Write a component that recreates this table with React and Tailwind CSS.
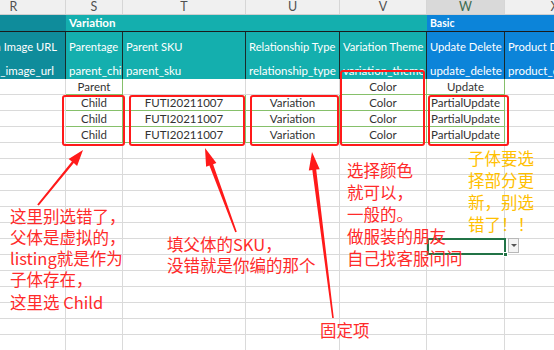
import React from 'react';

const W = ['w-[104px]', 'w-[57px]', 'w-[123px]', 'w-[94px]', 'w-[87px]', 'w-[78px]', 'w-[100px]'];
const LETTERS = ['R', 'S', 'T', 'U', 'V', 'W', 'X'];

function arrowPoints(tip, tail, headLen, headHalf, tailHalf, baseHalf) {
  const dx = tip[0] - tail[0];
  const dy = tip[1] - tail[1];
  const len = Math.hypot(dx, dy);
  const ux = dx / len, uy = dy / len;
  const nx = -uy, ny = ux;
  const bx = tip[0] - ux * headLen, by = tip[1] - uy * headLen;
  const p = [
    [tail[0] + nx * tailHalf, tail[1] + ny * tailHalf],
    [bx + nx * baseHalf, by + ny * baseHalf],
    [bx + nx * headHalf, by + ny * headHalf],
    tip,
    [bx - nx * headHalf, by - ny * headHalf],
    [bx - nx * baseHalf, by - ny * baseHalf],
    [tail[0] - nx * tailHalf, tail[1] - ny * tailHalf],
  ];
  return p.map((q) => q[0].toFixed(1) + ',' + q[1].toFixed(1)).join(' ');
}

const dataRows = [
  ['', 'Parent', '', '', 'Color', 'Update', ''],
  ['', 'Child', 'FUTI20211007', 'Variation', 'Color', 'PartialUpdate', ''],
  ['', 'Child', 'FUTI20211007', 'Variation', 'Color', 'PartialUpdate', ''],
  ['', 'Child', 'FUTI20211007', 'Variation', 'Color', 'PartialUpdate', ''],
];

const headers = ['Main Image URL', 'Parentage', 'Parent SKU', 'Relationship Type', 'Variation Theme', 'Update Delete', 'Product Description'];
const fields = ['main_image_url', 'parent_child', 'parent_sku', 'relationship_type', 'variation_theme', 'update_delete', 'product_description'];

export default function App() {
  const emptyRows = Array.from({ length: 14 });
  return (
    <div className="relative w-[554px] h-[350px] overflow-hidden bg-white font-['Noto_Sans_CJK_SC','Liberation_Sans',sans-serif]">
      <div className="ml-[-38px] flex flex-col font-['Lato','Liberation_Sans',sans-serif]">
        {/* column letters */}
        <div className="flex h-[15px] bg-[#f0f0f0] border-b border-[#cfcfcf]">
          {LETTERS.map((l, i) => (
            <div
              key={l}
              className={`${W[i]} shrink-0 flex items-center justify-center border-r border-[#d6d6d6] text-[12.5px] leading-none ${l === 'W' ? 'bg-[#d9d9d9] text-[#3d6b50]' : 'text-[#505050]'}`}
            >
              {l}
            </div>
          ))}
        </div>
        {/* group row */}
        <div className="flex h-[16px]">
          <div className="w-[104px] shrink-0 bg-[#0f8c9b]" />
          <div className="w-[361px] shrink-0 bg-[#14afae] flex items-center pl-[3px] text-white font-bold text-[11.5px] leading-none">Variation</div>
          <div className="w-[178px] shrink-0 bg-[#0c84d9] flex items-center pl-[3px] text-white font-bold text-[10.5px] leading-none">Basic</div>
        </div>
        {/* header names */}
        <div className="flex h-[32px] border-t border-[#1a1a1a]">
          {headers.map((h, i) => (
            <div
              key={h}
              className={`${W[i]} shrink-0 flex items-center overflow-hidden whitespace-nowrap text-white text-[11.2px] border-r border-[#1a2a2a] ${i === 0 ? 'bg-[#0f8c9b] justify-end pr-[8px]' : i >= 5 ? 'bg-[#0c84d9] pl-[3px]' : 'bg-[#14afae] pl-[3px]'}`}
            >
              {h}
            </div>
          ))}
        </div>
        {/* field names */}
        <div className="flex h-[16px]">
          {fields.map((f, i) => (
            <div
              key={f}
              className={`${W[i]} shrink-0 flex items-center overflow-hidden whitespace-nowrap text-white text-[11.5px] leading-none border-r ${i === 0 ? 'bg-[#0f8c9b] justify-end pr-[11px] border-[#1a2a2a]' : i >= 5 ? 'bg-[#0c84d9] pl-[3px] border-[#1a2a2a]' : 'bg-[#14afae] pl-[3px] border-[#1a2a2a]'}`}
            >
              {f}
            </div>
          ))}
        </div>
        {/* data rows */}
        {dataRows.map((row, r) => (
          <div key={r} className="flex h-[16px]">
            {row.map((v, i) => {
              const green = (i === 1 || i === 4 || i === 5 || ((i === 2 || i === 3) && r > 0));
              return (
                <div
                  key={i}
                  className={`${W[i]} shrink-0 flex items-center justify-center overflow-hidden whitespace-nowrap text-[11.5px] leading-none text-[#333] border-r border-b ${green ? 'border-[#86c06a]' : 'border-[#dadada]'}`}
                >
                  {v}
                </div>
              );
            })}
          </div>
        ))}
        {emptyRows.map((_, r) => (
          <div key={'e' + r} className="flex h-[16px]">
            {LETTERS.map((l, i) => (
              <div key={l} className={`${W[i]} shrink-0 border-r border-b border-[#dadada]`} />
            ))}
          </div>
        ))}
      </div>

      {/* selected cell with dropdown */}
      <div className="absolute left-[427px] top-[238px] w-[79px] h-[17px] border-2 border-[#217346]">
        <div className="absolute right-[-4px] bottom-[-4px] w-[5px] h-[5px] bg-[#217346] border border-white" />
      </div>
      <div className="absolute left-[508px] top-[238px] w-[11px] h-[15px] bg-[#f4f4f4] border border-[#b8b8b8] flex items-center justify-center">
        <div className="w-0 h-0 border-l-[3px] border-r-[3px] border-t-[3px] border-l-transparent border-r-transparent border-t-[#555]" />
      </div>

      {/* red boxes */}
      <div className="absolute left-[62px] top-[95px] w-[63px] h-[51px] border-2 border-[#ff1a1a] rounded-[3px]" />
      <div className="absolute left-[129px] top-[95px] w-[116px] h-[51px] border-2 border-[#ff1a1a] rounded-[3px]" />
      <div className="absolute left-[250px] top-[95px] w-[89px] h-[51px] border-2 border-[#ff1a1a] rounded-[3px]" />
      <div className="absolute left-[340px] top-[70px] w-[85px] h-[76px] border-2 border-[#ff1a1a] rounded-[3px]" />
      <div className="absolute left-[428px] top-[95px] w-[81px] h-[51px] border-2 border-[#ff1a1a] rounded-[3px]" />

      {/* arrows */}
      <svg className="absolute left-0 top-0" width="554" height="350" viewBox="0 0 554 350">
        <polygon fill="#ff1a1a" points={arrowPoints([83, 150], [38, 205], 16, 5.5, 1, 1.2)} />
        <polygon fill="#ff1a1a" points={arrowPoints([205, 148], [236, 232], 18, 5.5, 0.8, 2)} />
        <polygon fill="#ff1a1a" points={arrowPoints([312, 152], [333, 318], 18, 5.5, 0.8, 2)} />
      </svg>

      {/* annotations */}
      <div className="absolute left-[10px] top-[206px] text-[16.5px] leading-[21px] text-[#ff2a2a] whitespace-nowrap">
        <div>这里别选错了，</div>
        <div>父体是虚拟的，</div>
        <div>listing就是作为</div>
        <div>子体存在，</div>
        <div className="mt-[2px]">这里选 Child</div>
      </div>
      <div className="absolute left-[167px] top-[234px] text-[16.5px] leading-[21px] text-[#ff2a2a] whitespace-nowrap">
        <div>填父体的SKU，</div>
        <div>没错就是你编的那个</div>
      </div>
      <div className="absolute left-[347px] top-[159px] text-[16.5px] leading-[22px] text-[#ff2a2a] whitespace-nowrap">
        <div>选择颜色</div>
        <div>就可以，</div>
        <div>一般的。</div>
        <div>做服装的朋友</div>
        <div>自己找客服问问</div>
      </div>
      <div className="absolute left-[468px] top-[147px] text-[16.5px] leading-[22px] text-[#ffc000] whitespace-nowrap">
        <div>子体要选</div>
        <div>择部分更</div>
        <div>新，别选</div>
        <div>错了！！</div>
      </div>
      <div className="absolute left-[320px] top-[319px] text-[16.5px] leading-[22px] text-[#ff2a2a] whitespace-nowrap">固定项</div>
    </div>
  );
}
